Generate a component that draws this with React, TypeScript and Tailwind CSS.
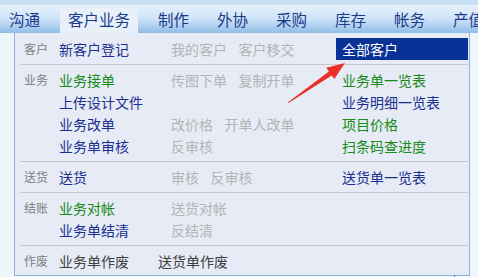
import React from "react";

const font = { fontFamily: '"Noto Sans CJK SC", "Noto Sans", sans-serif' };

const menus = ["沟通", "客户业务", "制作", "外协", "采购", "库存", "帐务", "产值"];

type Item = { text: string; tone: "blue" | "green" | "gray" };

const toneClass = {
  blue: "text-[#1a2f8f]",
  green: "text-[#178a17]",
  gray: "text-[#b4b4b4]",
};

const Row = ({
  label,
  main,
  middle = [],
  right,
  active,
}: {
  label?: string;
  main?: Item;
  middle?: Item[];
  right?: Item;
  active?: boolean;
}) => (
  <div className="flex h-[22px] items-center whitespace-nowrap">
    <div className="w-[44px] shrink-0 pl-[9px] text-[12px] text-[#808080]">{label}</div>
    <div className={`w-[112px] shrink-0 text-[14px] ${main ? toneClass[main.tone] : ""}`}>{main?.text}</div>
    <div className="flex w-[165px] shrink-0 gap-[11.5px] text-[14px]">
      {middle.map((m) => (
        <span key={m.text} className={toneClass[m.tone]}>
          {m.text}
        </span>
      ))}
    </div>
    {right && (
      <div
        className={`flex h-[22px] w-[132px] shrink-0 items-center pl-[6px] text-[14px] ${
          active ? "bg-[#0a3296] text-white" : toneClass[right.tone]
        }`}
      >
        {right.text}
      </div>
    )}
  </div>
);

const Sep = () => <div className="my-[4px] ml-[5px] mr-[1px] h-px bg-[#c8c8c8]" />;

export default function App() {
  return (
    <div className="relative h-[277px] w-[478px] overflow-hidden bg-[#eef6fc]" style={font}>
      <div className="h-[5px] bg-[#c8dff4]" />
      <div className="flex h-[28px] gap-[12px] whitespace-nowrap bg-linear-to-b from-[#e6f2fc] via-[#cde3f7] to-[#8fbde6] pl-[1px]">
        {menus.map((m, i) => (
          <div
            key={m}
            className={`mt-[2px] flex shrink-0 items-center px-[8px] text-[15.5px] text-[#1c3a8c] ${
              i === 1 ? "bg-[#e8f0fa]" : ""
            }`}
          >
            {m}
          </div>
        ))}
      </div>

      <div className="ml-[14px] w-[456px] border border-t-0 border-[#8fb4e3] bg-[#e6ebf6] pb-[3px] pt-[5px]">
        <Row
          label="客户"
          main={{ text: "新客户登记", tone: "blue" }}
          middle={[
            { text: "我的客户", tone: "gray" },
            { text: "客户移交", tone: "gray" },
          ]}
          right={{ text: "全部客户", tone: "blue" }}
          active
        />
        <Sep />
        <Row
          label="业务"
          main={{ text: "业务接单", tone: "green" }}
          middle={[
            { text: "传图下单", tone: "gray" },
            { text: "复制开单", tone: "gray" },
          ]}
          right={{ text: "业务单一览表", tone: "green" }}
        />
        <Row main={{ text: "上传设计文件", tone: "blue" }} right={{ text: "业务明细一览表", tone: "blue" }} />
        <Row
          main={{ text: "业务改单", tone: "blue" }}
          middle={[
            { text: "改价格", tone: "gray" },
            { text: "开单人改单", tone: "gray" },
          ]}
          right={{ text: "项目价格", tone: "green" }}
        />
        <Row
          main={{ text: "业务单审核", tone: "blue" }}
          middle={[{ text: "反审核", tone: "gray" }]}
          right={{ text: "扫条码查进度", tone: "green" }}
        />
        <Sep />
        <Row
          label="送货"
          main={{ text: "送货", tone: "blue" }}
          middle={[
            { text: "审核", tone: "gray" },
            { text: "反审核", tone: "gray" },
          ]}
          right={{ text: "送货单一览表", tone: "blue" }}
        />
        <Sep />
        <Row
          label="结账"
          main={{ text: "业务对帐", tone: "green" }}
          middle={[{ text: "送货对帐", tone: "gray" }]}
        />
        <Row main={{ text: "业务单结清", tone: "blue" }} middle={[{ text: "反结清", tone: "gray" }]} />
        <Sep />
        <div className="flex h-[22px] items-center whitespace-nowrap text-[14px] text-[#404040]">
          <div className="w-[44px] shrink-0 pl-[9px] text-[12px] text-[#808080]">作废</div>
          <div className="w-[99px] shrink-0">业务单作废</div>
          <div>送货单作废</div>
        </div>
      </div>

      <div className="absolute left-[454px] top-[275px] h-[2px] w-px bg-[#5a8fd0]" />

      <svg className="pointer-events-none absolute left-0 top-0" width="478" height="277">
        <polygon
          points="288.5,103 331.7,75.4 334.3,79.1 345,63 326.3,67.7 328.9,71.4 288,102.2"
          fill="#ec2f2a"
        />
      </svg>
    </div>
  );
}
